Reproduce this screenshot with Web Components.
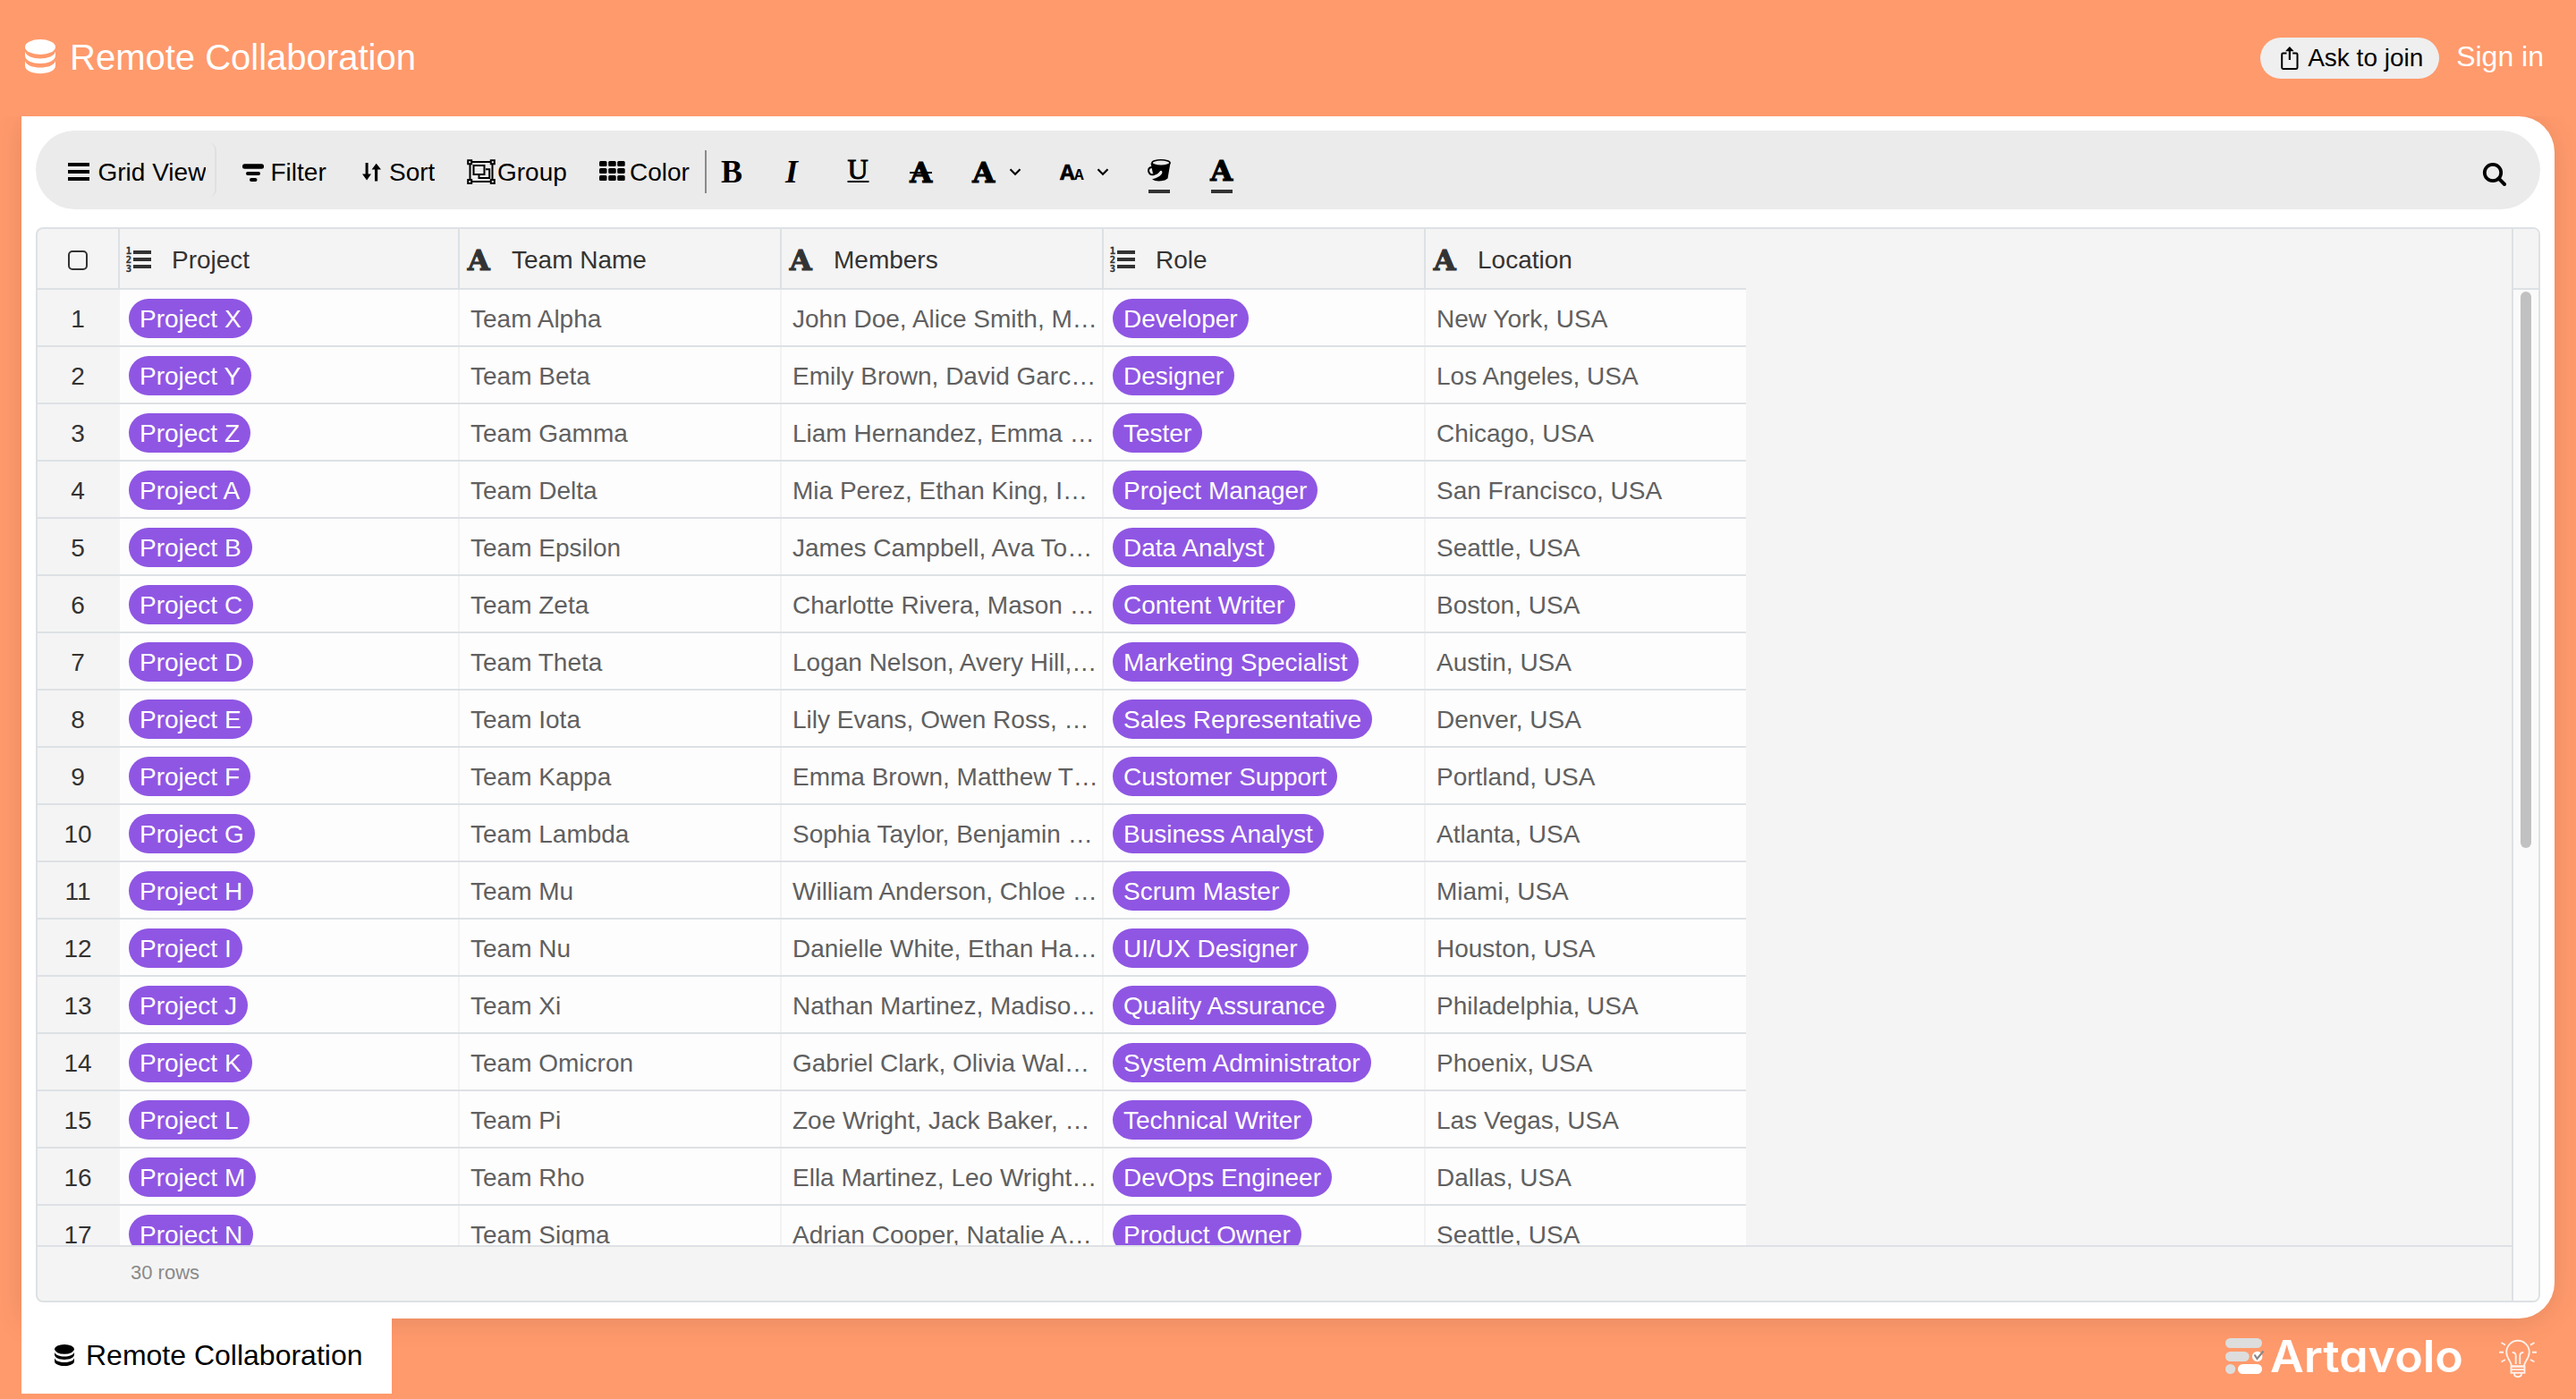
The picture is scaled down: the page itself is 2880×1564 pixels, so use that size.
<!DOCTYPE html>
<html lang="en">
<head>
<meta charset="utf-8">
<title>Remote Collaboration</title>
<style>
  html, body { height: 100%; }
  body {
    margin: 0;
    overflow: hidden;
    background: #ff9a6c;
    font-family: "Liberation Sans", Arial, sans-serif;
    font-size: 28px;
    color: #000;
  }
</style>
</head>
<body>
<av-app></av-app>

<script>
const SLAB = `font-family="DejaVu Serif, serif" font-weight="700" stroke="currentColor" stroke-width="1.2"`;
const SERIF = `font-family="Liberation Serif, serif"`;

// name: [width, height, markup]
const ICONS = {
  database: [34, 38, `<ellipse cx="17" cy="8.5" rx="17" ry="8.5"/>
    <path d="M0 13.5C2 24 32 24 34 13.5V18C34 30 0 30 0 18Z"/>
    <path d="M0 24C2 34 32 34 34 24V29.500C34 41 0 41 0 29.500Z"/>`],
  share: [20, 26, `<path d="M6.500 7.500H2.500Q1.200 7.500 1.200 8.800V23.600Q1.200 24.900 2.500 24.900H17.200Q18.500 24.900 18.500 23.600V8.800Q18.500 7.500 17.200 7.500H13.200" fill="none" stroke="currentColor" stroke-width="2"/>
    <path d="M9.850 15V3" stroke="currentColor" stroke-width="2.200"/><path d="M5 5.200L9.850 0L14.700 5.200Z"/>`],
  bars: [24, 52, `<path d="M0 18h24v4H0zM0 26h24v4H0zM0 34h24v4H0z"/>`],
  filter: [24, 52, `<rect y="19.300" width="24" height="5.500" rx="2.500"/><rect x="4" y="28" width="16" height="4" rx="2"/><rect x="8" y="35" width="8.500" height="4" rx="2"/>`],
  sort: [21, 52, `<path d="M3.600 18h3v12.500H10L5.100 37.500L0 30.500H3.600zM14 38.500h3.200V25.500H21L15.700 18.800L10.600 25.500H14z"/>`],
  group: [32, 52, `<g fill="none" stroke="currentColor" stroke-width="2"><path d="M5 17H27M5 39H27M3.500 19V37M28.500 19V37"/>
    <path d="M1.200 15.200h4v4h-4zM26.800 15.200h4v4h-4zM1.200 37h4v4h-4zM26.800 37h4v4h-4z"/>
    <path d="M7.500 21H19.500V31H7.500zM21 25.200H25.200V35H13.500V32"/></g>`],
  grid: [29, 52, [16, 24, 32].map((y) => [0, 10.200, 20.200].map((x) => `<rect x="${x}" y="${y}" width="8.500" height="6" rx="1.500"/>`).join("")).join("")],
  bold: [24, 52, `<text x="0" y="40" ${SERIF} font-weight="700" font-size="36">B</text>`],
  italic: [24, 52, `<text x="2" y="40" ${SERIF} font-weight="700" font-style="italic" font-size="36">I</text>`],
  underline: [26, 52, `<text x="1.500" y="36" ${SERIF} font-size="32" stroke="currentColor" stroke-width="1">U</text><path d="M1.500 38h24v2h-24z"/>`],
  strike: [26, 52, `<text x="1.300" y="39.700" ${SLAB} font-size="32">A</text><path d="M1 28h25v2h-25z"/>`],
  font: [26, 52, `<text x="1.300" y="39.700" ${SLAB} font-size="32">A</text>`],
  size: [28, 52, `<text x="1" y="37" font-family="Open Sans, sans-serif" font-weight="700" font-size="24" stroke="currentColor" stroke-width=".5">A</text><text x="17" y="37" font-family="Open Sans, sans-serif" font-weight="700" font-size="15.500">A</text>`],
  chevron: [14, 52, `<path d="M1.500 25.200L7 30.800L12.500 25.200" fill="none" stroke="currentColor" stroke-width="2.200"/>`],
  fill: [28, 52, `<path d="M4.500 18.500L7 30Q12 32 14 28Q17 25 17.500 29Q16 34 6 36.500Q10 39 16 38.300Q21 38 23.500 35.500L26.500 18Z"/>
    <ellipse cx="16" cy="18" rx="10" ry="3.200" fill="#ebebeb" stroke="currentColor" stroke-width="1.600"/>
    <path d="M6 23Q2 23 2 27Q3 32 8 31Q14 29 15 24" fill="none" stroke="currentColor" stroke-width="2"/>
    <path d="M2 48h24v4H2z" fill="#333"/>`],
  color: [28, 52, `<text x="1.300" y="37.700" ${SLAB} font-size="32">A</text><path d="M2 48h24v4H2z" fill="#333"/>`],
  search: [26, 26, `<circle cx="11" cy="11" r="9.200" fill="none" stroke="currentColor" stroke-width="3.800"/><path d="M17.500 17.500L24 24" stroke="currentColor" stroke-width="4" stroke-linecap="round"/>`],
  text: [26, 28, `<text x=".8" y="25.700" ${SLAB} font-size="32">A</text>`],
  list: [28, 28, `<path d="M8 4h20v4H8zM8 12h20v4H8zM8 20h20v4H8z"/>
    <g font-family="DejaVu Sans Mono, monospace" font-weight="700" font-size="10.500" stroke="currentColor" stroke-width=".3"><text x="-.3" y="8">1</text><text x="-.3" y="18">2</text><text x="-.3" y="28">3</text></g>`],
  bulb: [42, 42, `<g fill="none" stroke="currentColor" stroke-width="1.900" opacity=".85">
    <path d="M14 29.500C14 24 8.200 21 8.200 13.600A12.800 12.800 0 0 1 33.800 13.600C33.800 21 28 24 28 29.500Z"/>
    <path d="M18.700 27V17.500Q18.500 13.700 14.700 14M23.300 27V17.500Q23.500 13.700 27.300 14"/>
    <path d="M13.500 29.500h15v3.600h-15zM13.500 33.100h15v3.600h-15zM17 37.500Q17 41.200 21 41.200Q25 41.200 25 37.500"/>
    <path d="M0 13.700H5M37 13.700H42M2.500 3L7 5.600M39.500 3L35 5.600M2.500 24.500L7 22M39.500 24.500L35 22"/></g>`],
  brand: [44, 42, `<g fill="#ddd"><rect y="1" width="41" height="11" rx="5.500"/><rect y="16" width="26.700" height="11" rx="5.500"/><circle cx="5.600" cy="35.500" r="5.600"/></g>
    <circle cx="35.700" cy="21.500" r="5.700" fill="#fff"/><rect x="14" y="30" width="27" height="11" rx="5.500" fill="#fff"/>
    <path d="M32.500 19.500L35.500 24L42.500 15.500" fill="none" stroke="#888" stroke-width="2.200"/>`],
};

class AvIcon extends HTMLElement {
  connectedCallback() {
    const [w, h, body] = ICONS[this.getAttribute("name")];
    const width = this.getAttribute("width") ?? w;
    const height = this.getAttribute("height") ?? h;
    this.attachShadow({ mode: "open" }).innerHTML = `
      <style>
        :host { display: block; flex: none; }
        svg { display: block; overflow: visible; }
      </style>
      <svg width="${width}" height="${height}" viewBox="0 0 ${w} ${h}" preserveAspectRatio="none" fill="currentColor">${body}</svg>
    `;
  }
}
customElements.define("av-icon", AvIcon);

class AvHeader extends HTMLElement {
  connectedCallback() {
    this.attachShadow({ mode: "open" }).innerHTML = `
      <style>
        :host {
          display: flex;
          align-items: center;
          box-sizing: border-box;
          height: 130px;
          padding: 0 36px 4px 28px;
          background: #ff9a6c;
          color: #fff;
          position: relative;
          z-index: 1;
        }
        h1 { margin: 2px auto 0 16px; font-size: 40px; font-weight: 400; line-height: 46px; }
        button {
          display: flex;
          align-items: center;
          gap: 10px;
          box-sizing: border-box;
          width: 200px;
          height: 46px;
          margin: 4px 19px 0 0;
          padding: 0 0 1px 23px;
          border: 0;
          border-radius: 23px;
          background: #efefef;
          font: inherit;
          white-space: nowrap;
        }
        .sign { font-size: 32px; line-height: 36px; }
      </style>
      <av-icon name="database"></av-icon>
      <h1><slot></slot></h1>
      <button type="button"><av-icon name="share"></av-icon>Ask to join</button>
      <span class="sign">Sign in</span>
    `;
  }
}
customElements.define("av-header", AvHeader);

class AvTool extends HTMLElement {
  connectedCallback() {
    const width = this.getAttribute("width");
    const gap = this.getAttribute("gap") ?? 0;
    this.attachShadow({ mode: "open" }).innerHTML = `
      <style>
        :host {
          display: flex;
          align-items: center;
          flex: none;
          box-sizing: border-box;
          width: ${width}px;
          gap: ${gap}px;
          height: 60px;
          white-space: nowrap;
        }
        :host([view]) { margin-right: 29px; padding-right: 9px; border-right: 2px solid #e0e0e0; border-radius: 0 8px 8px 0; }
        span { padding-top: 6px; line-height: 32px; overflow: hidden; }
      </style>
      <av-icon name="${this.getAttribute("icon")}"></av-icon>
      ${this.hasAttribute("menu") ? `<av-icon name="chevron"></av-icon>` : `<span><slot></slot></span>`}
    `;
  }
}
customElements.define("av-tool", AvTool);

class AvToolbar extends HTMLElement {
  connectedCallback() {
    this.attachShadow({ mode: "open" }).innerHTML = `
      <style>
        :host {
          display: flex;
          align-items: center;
          box-sizing: border-box;
          height: 88px;
          padding: 0 38px 0 35px;
          border-radius: 44px;
          background: #ebebeb;
        }
        hr { flex: none; width: 2px; height: 48px; margin: 4px 16px 0 0; border: 0; background: #8a8a8a; }
        .search { margin: 10px 0 0 auto; }
        av-tool:first-of-type { margin-left: 1px; }
      </style>
      <av-tool view icon="bars" width="166" gap="9.5">Grid View</av-tool>
      <av-tool icon="filter" width="134" gap="7.5">Filter</av-tool>
      <av-tool icon="sort" width="117" gap="9">Sort</av-tool>
      <av-tool icon="group" width="148" gap="2">Group</av-tool>
      <av-tool icon="grid" width="118" gap="5">Color</av-tool>
      <hr>
      <av-tool icon="bold" width="70"></av-tool>
      <av-tool icon="italic" width="70"></av-tool>
      <av-tool icon="underline" width="70"></av-tool>
      <av-tool icon="strike" width="70"></av-tool>
      <av-tool icon="font" width="98" gap="16" menu></av-tool>
      <av-tool icon="size" width="98" gap="14" menu></av-tool>
      <av-tool icon="fill" width="70"></av-tool>
      <av-tool icon="color" width="70"></av-tool>
      <av-icon class="search" name="search"></av-icon>
    `;
  }
}
customElements.define("av-toolbar", AvToolbar);

class AvChip extends HTMLElement {
  connectedCallback() {
    this.attachShadow({ mode: "open" }).innerHTML = `
      <style>
        :host {
          display: inline-block;
          height: 44px;
          line-height: 46px;
          padding: 0 12px;
          border-radius: 22px;
          background: #8f56e3;
          color: #fff;
        }
      </style>
      <slot></slot>
    `;
  }
}
customElements.define("av-chip", AvChip);

const COLUMNS = [
  ["list", "Project"],
  ["text", "Team Name"],
  ["text", "Members"],
  ["list", "Role"],
  ["text", "Location"],
];

const ROWS = [
  ["Project X", "Team Alpha", "John Doe, Alice Smith, M…", "Developer", "New York, USA"],
  ["Project Y", "Team Beta", "Emily Brown, David Garc…", "Designer", "Los Angeles, USA"],
  ["Project Z", "Team Gamma", "Liam Hernandez, Emma …", "Tester", "Chicago, USA"],
  ["Project A", "Team Delta", "Mia Perez, Ethan King, I…", "Project Manager", "San Francisco, USA"],
  ["Project B", "Team Epsilon", "James Campbell, Ava To…", "Data Analyst", "Seattle, USA"],
  ["Project C", "Team Zeta", "Charlotte Rivera, Mason …", "Content Writer", "Boston, USA"],
  ["Project D", "Team Theta", "Logan Nelson, Avery Hill,…", "Marketing Specialist", "Austin, USA"],
  ["Project E", "Team Iota", "Lily Evans, Owen Ross, …", "Sales Representative", "Denver, USA"],
  ["Project F", "Team Kappa", "Emma Brown, Matthew T…", "Customer Support", "Portland, USA"],
  ["Project G", "Team Lambda", "Sophia Taylor, Benjamin …", "Business Analyst", "Atlanta, USA"],
  ["Project H", "Team Mu", "William Anderson, Chloe …", "Scrum Master", "Miami, USA"],
  ["Project I", "Team Nu", "Danielle White, Ethan Ha…", "UI/UX Designer", "Houston, USA"],
  ["Project J", "Team Xi", "Nathan Martinez, Madiso…", "Quality Assurance", "Philadelphia, USA"],
  ["Project K", "Team Omicron", "Gabriel Clark, Olivia Wal…", "System Administrator", "Phoenix, USA"],
  ["Project L", "Team Pi", "Zoe Wright, Jack Baker, …", "Technical Writer", "Las Vegas, USA"],
  ["Project M", "Team Rho", "Ella Martinez, Leo Wright…", "DevOps Engineer", "Dallas, USA"],
  ["Project N", "Team Sigma", "Adrian Cooper, Natalie A…", "Product Owner", "Seattle, USA"],
];

class AvGrid extends HTMLElement {
  connectedCallback() {
    const head = COLUMNS.map(([icon, label]) => `
      <div class="th"><av-icon name="${icon}"></av-icon><span>${label}</span></div>`).join("");
    const rows = ROWS.map((row, i) => `
      <div class="row">
        <div class="num">${i + 1}</div>
        ${row.map((value, c) => COLUMNS[c][0] === "list"
          ? `<div class="td tag"><av-chip>${value}</av-chip></div>`
          : `<div class="td">${value}</div>`).join("")}
      </div>`).join("");
    this.attachShadow({ mode: "open" }).innerHTML = `
      <style>
        :host {
          display: grid;
          grid-template-columns: 1fr 30px;
          box-sizing: border-box;
          height: 1202px;
          border: 2px solid #dde1e5;
          border-radius: 8px;
          background: #f4f4f4;
          overflow: hidden;
          color: #333;
        }
        .main { display: flex; flex-direction: column; min-width: 0; min-height: 0; }
        .head, .row {
          display: grid;
          grid-template-columns: 92px 380px 360px 360px 360px 358px;
          box-sizing: border-box;
          width: 1910px;
          border-bottom: 2px solid #dde1e5;
        }
        .head { flex: none; height: 68px; }
        .head > div { display: flex; align-items: center; border-right: 2px solid #dde1e5; }
        .head > div:last-child { border-right: 0; }
        .check { justify-content: center; }
        .check i {
          box-sizing: border-box;
          width: 22px;
          height: 22px;
          margin-top: 4px;
          border: 2px solid #333;
          border-radius: 5px;
        }
        .th { padding: 2px 0 0 8px; }
        .th av-icon[name="list"] { margin-left: -1px; width: 28px; }
        .th span { padding-top: 2px; line-height: 32px; }
        .th av-icon + span { margin-left: 24px; }
        .th av-icon[name="list"] + span { margin-left: 23px; }
        .body { flex: 1; min-height: 0; overflow: hidden; }
        .row { height: 64px; line-height: 66px; }
        .num { height: 62px; text-align: center; border-right: 2px solid #f4f4f4; }
        .td {
          height: 62px;
          box-sizing: border-box;
          padding-left: 12px;
          border-right: 2px solid #f3f3f3;
          background: #fdfdfd;
          color: #606060;
          white-space: nowrap;
          overflow: hidden;
        }
        .td:last-child { border-right: 0; }
        .tag { padding: 10px 0 0 10px; line-height: 0; }
        .foot {
          flex: none;
          box-sizing: border-box;
          height: 62px;
          padding-left: 104px;
          border-top: 2px solid #dde1e5;
          font-size: 22px;
          line-height: 57px;
          color: #8a8a8a;
        }
        .scroll { border-left: 2px solid #dde1e5; background: #fafafa; }
        .corner { height: 66px; border-bottom: 2px solid #dde1e5; background: #f4f4f4; }
        .thumb { width: 12px; height: 622px; margin: 2px 0 0 8px; border-radius: 6px; background: #c1c1c1; }
      </style>
      <div class="main">
        <div class="head"><div class="check"><i></i></div>${head}</div>
        <div class="body">${rows}</div>
        <div class="foot">30 rows</div>
      </div>
      <div class="scroll"><div class="corner"></div><div class="thumb"></div></div>
    `;
  }
}
customElements.define("av-grid", AvGrid);

class AvFooter extends HTMLElement {
  connectedCallback() {
    this.attachShadow({ mode: "open" }).innerHTML = `
      <style>
        :host { display: flex; align-items: flex-start; height: 90px; padding: 0 44px 0 24px; position: relative; }
        .tab {
          display: flex;
          align-items: center;
          gap: 13px;
          box-sizing: border-box;
          width: 414px;
          height: 84px;
          margin-right: auto;
          padding: 0 0 2px 37px;
          background: #fff;
          font-size: 32px;
          white-space: nowrap;
        }
        .brand { display: block; margin: 21px 41px 0 0; }
        .brand, av-icon { color: #fff; }
        .tab av-icon { color: #000; }
        .mark { margin-top: 21px; }
        .bulb { margin-top: 24px; }
      </style>
      <div class="tab"><av-icon name="database" width="22" height="24"></av-icon><span><slot></slot></span></div>
      <av-icon class="mark" name="brand"></av-icon>
      <svg class="brand" width="221" height="42" fill="currentColor" style="overflow:visible">
        <text x="6" y="38.500" textLength="216" lengthAdjust="spacingAndGlyphs" font-family="Inter, sans-serif" font-weight="600" font-size="49" style="font-feature-settings:'cv11'">Artavolo</text>
      </svg>
      <av-icon class="bulb" name="bulb"></av-icon>
    `;
  }
}
customElements.define("av-footer", AvFooter);

class AvApp extends HTMLElement {
  connectedCallback() {
    this.attachShadow({ mode: "open" }).innerHTML = `
      <style>
        :host { display: block; width: 2880px; height: 1564px; overflow: hidden; }
        main {
          display: flex;
          flex-direction: column;
          gap: 20px;
          box-sizing: border-box;
          height: 1344px;
          margin: 0 24px;
          padding: 16px 16px 18px;
          border-radius: 0 40px 40px 0;
          background: #fff;
          box-shadow: 0 4px 32px rgba(0, 0, 0, 0.1);
        }
      </style>
      <av-header>Remote Collaboration</av-header>
      <main>
        <av-toolbar></av-toolbar>
        <av-grid></av-grid>
      </main>
      <av-footer>Remote Collaboration</av-footer>
    `;
  }
}
customElements.define("av-app", AvApp);
</script>
</body>
</html>
